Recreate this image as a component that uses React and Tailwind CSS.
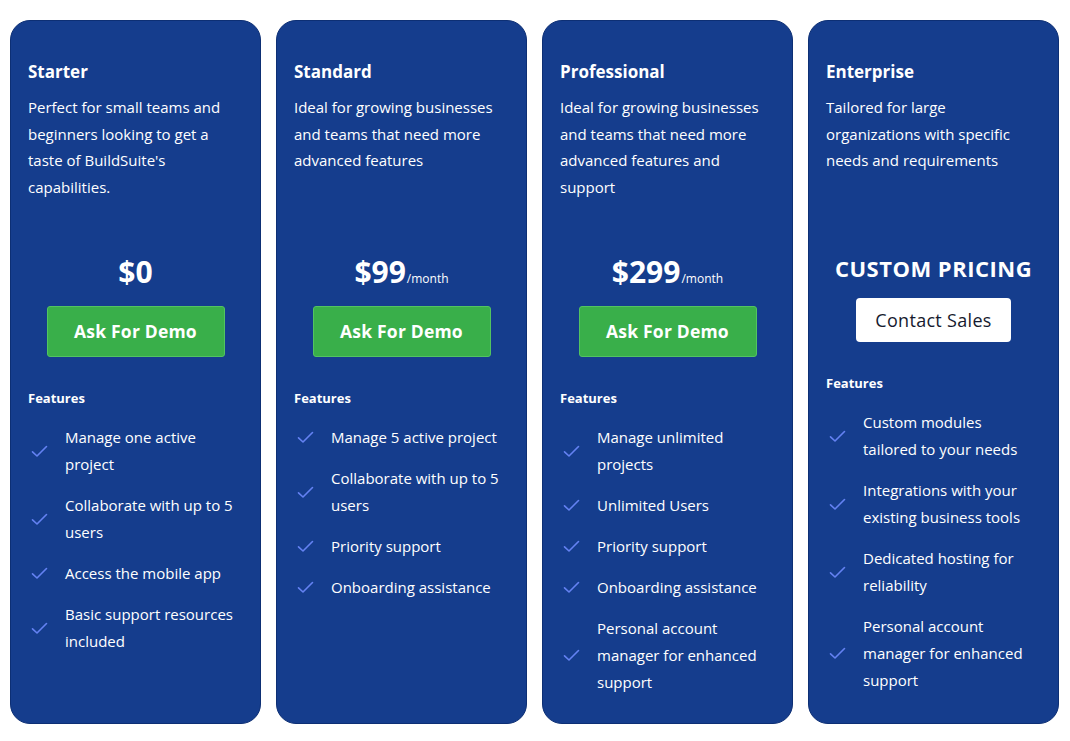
import React from "react";

const plans = [
  {
    name: "Starter",
    desc: "Perfect for small teams and beginners looking to get a taste of BuildSuite's capabilities.",
    price: "$0",
    per: false,
    features: [
      "Manage one active project",
      "Collaborate with up to 5 users",
      "Access the mobile app",
      "Basic support resources included",
    ],
  },
  {
    name: "Standard",
    desc: "Ideal for growing businesses and teams that need more advanced features",
    price: "$99",
    per: true,
    features: [
      "Manage 5 active project",
      "Collaborate with up to 5 users",
      "Priority support",
      "Onboarding assistance",
    ],
  },
  {
    name: "Professional",
    desc: "Ideal for growing businesses and teams that need more advanced features and support",
    price: "$299",
    per: true,
    features: [
      "Manage unlimited projects",
      "Unlimited Users",
      "Priority support",
      "Onboarding assistance",
      "Personal account manager for enhanced support",
    ],
  },
  {
    name: "Enterprise",
    desc: "Tailored for large organizations with specific needs and requirements",
    custom: true,
    features: [
      "Custom modules tailored to your needs",
      "Integrations with your existing business tools",
      "Dedicated hosting for reliability",
      "Personal account manager for enhanced support",
    ],
  },
];

function Check() {
  return (
    <svg width="17" height="13" viewBox="0 0 17 13" fill="none">
      <path d="M1.5 6.8 L6 11 L15.5 1.5" stroke="#6482f2" strokeWidth="1.6" strokeLinecap="round" strokeLinejoin="round" />
    </svg>
  );
}

function Card({ plan }) {
  return (
    <div className="w-[251px] h-[704px] shrink-0 rounded-[20px] bg-[#153d8d] border border-[#0d2f74] pt-[39px] px-[17px] text-white">
      <div className="text-[17px] leading-[24px] font-bold">{plan.name}</div>
      <div className="mt-[10px] h-[160px] text-[15px] leading-[26.5px] pr-[2px]">{plan.desc}</div>
      {plan.custom ? (
        <>
          <div className="h-[28px] flex items-center justify-center text-[22px] font-bold tracking-[0.5px]">CUSTOM PRICING</div>
          <div className="mt-[16px] flex justify-center">
            <div className="w-[155px] h-[44px] rounded-[4px] bg-white text-[#161a2e] text-[18px] font-medium tracking-[0.3px] flex items-center justify-center">Contact Sales</div>
          </div>
        </>
      ) : (
        <>
          <div className="h-[36px] flex items-baseline justify-center">
            <span className="text-[30px] leading-[36px] font-bold">{plan.price}</span>
            {plan.per && <span className="text-[12px] ml-[1px]">/month</span>}
          </div>
          <div className="mt-[16px] flex justify-center">
            <div className="w-[178px] h-[51px] rounded-[3px] bg-[#39af4a] border border-[#52c460] text-[17.5px] font-bold tracking-[0.2px] flex items-center justify-center">Ask For Demo</div>
          </div>
        </>
      )}
      <div className="mt-[33px] text-[13px] leading-[16px] font-bold">Features</div>
      <div className="mt-[18px] flex flex-col gap-[14px]">
        {plan.features.map((f) => (
          <div key={f} className="flex items-center">
            <div className="w-[37px] shrink-0 pl-[3px] flex items-center">
              <Check />
            </div>
            <div className="text-[15px] leading-[27px] pr-[4px]">{f}</div>
          </div>
        ))}
      </div>
    </div>
  );
}

export default function App() {
  return (
    <div className="w-[1070px] h-[741px] bg-white flex gap-[15px] pl-[10px] pt-[20px]" style={{ fontFamily: "'Open Sans', 'Noto Sans', sans-serif" }}>
      {plans.map((p) => (
        <Card key={p.name} plan={p} />
      ))}
    </div>
  );
}
